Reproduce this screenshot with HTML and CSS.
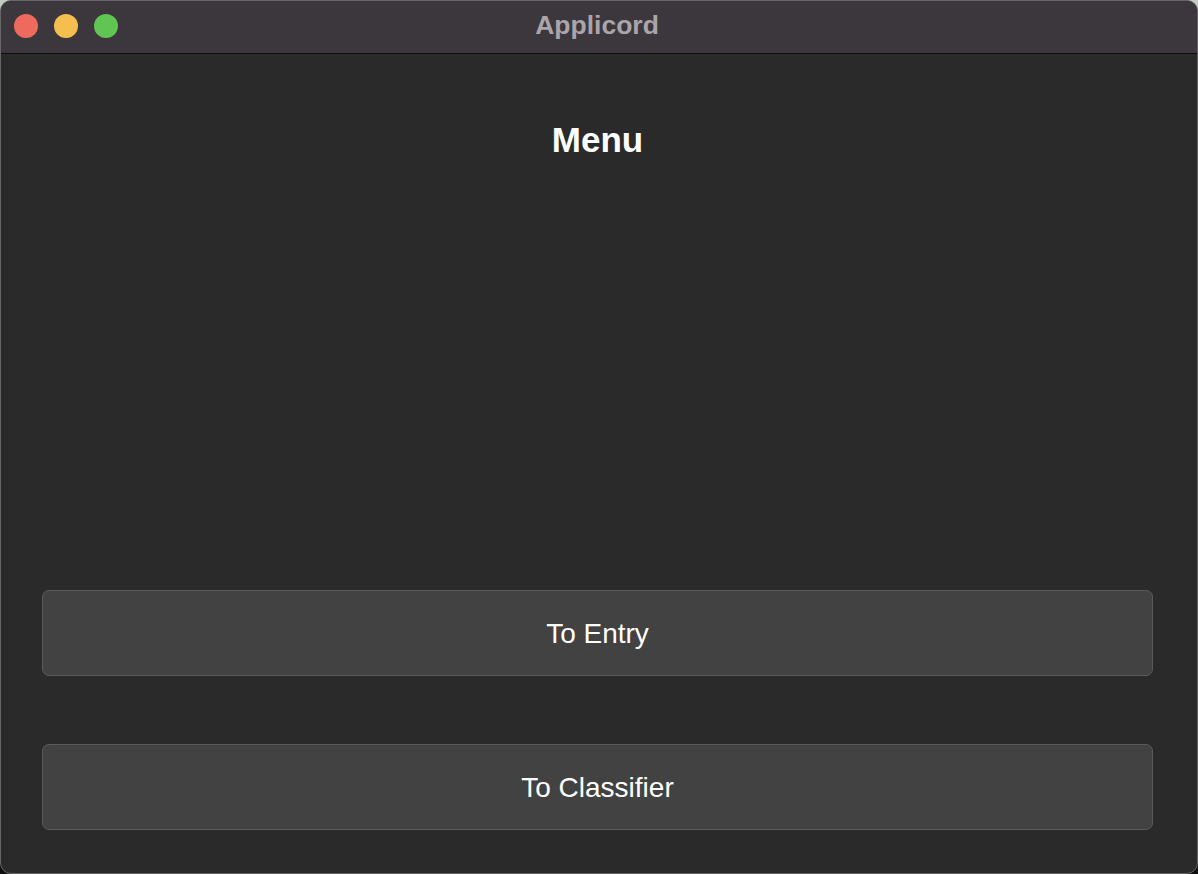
FILE: index.html
```html
<!DOCTYPE html>
<html>
<head>
<meta charset="utf-8">
<link rel="stylesheet" href="styles.css">
</head>
<body>
<div class="window">
  <div class="titlebar">
    <div class="lights">
      <span class="light red"></span>
      <span class="light yellow"></span>
      <span class="light green"></span>
    </div>
    <div class="title">Applicord</div>
  </div>
  <div class="content">
    <h1 class="heading">Menu</h1>
    <div class="buttons">
      <button class="btn">To Entry</button>
      <button class="btn">To Classifier</button>
    </div>
  </div>
</div>
</body>
</html>
```
FILE: styles.css
```css
html, body {
  margin: 0;
  padding: 0;
  width: 1198px;
  height: 874px;
  overflow: hidden;
}
body {
  background: linear-gradient(#c8c8c8 50%, #0e0e0e 50%);
  font-family: "Liberation Sans", Arial, sans-serif;
}
.window {
  box-sizing: border-box;
  width: 1198px;
  height: 874px;
  border-radius: 11px;
  border: 1px solid #666;
  background: #2a2a2a;
  overflow: hidden;
  display: flex;
  flex-direction: column;
}
.titlebar {
  position: relative;
  height: 52px;
  flex: none;
  background: #3b373c;
  border-bottom: 1px solid #0c0c0c;
  display: flex;
  align-items: center;
  justify-content: center;
}
.lights {
  position: absolute;
  left: 13px;
  top: 13px;
  display: flex;
  gap: 16px;
}
.light {
  width: 24px;
  height: 24px;
  border-radius: 50%;
  display: block;
}
.red { background: #ee6a5f; }
.yellow { background: #f5bf4f; }
.green { background: #61c554; }
.title {
  color: #aaa5ab;
  font-weight: bold;
  font-size: 26.5px;
  margin-top: -3px;
  margin-left: -4px;
}
.content {
  flex: 1;
  display: flex;
  flex-direction: column;
  padding: 0 44px 43px 41px;
}
.heading {
  margin: 64px 0 0;
  text-align: center;
  color: #ffffff;
  font-size: 35px;
  font-weight: bold;
  line-height: 44px;
}
.buttons {
  margin-top: auto;
  display: flex;
  flex-direction: column;
  gap: 68px;
}
.btn {
  height: 86px;
  background: #424242;
  border: 1px solid #5a5a5a;
  border-radius: 7px;
  color: #ffffff;
  font-family: "Liberation Sans", Arial, sans-serif;
  font-size: 28px;
  padding: 0;
  padding-top: 2px;
}
```
